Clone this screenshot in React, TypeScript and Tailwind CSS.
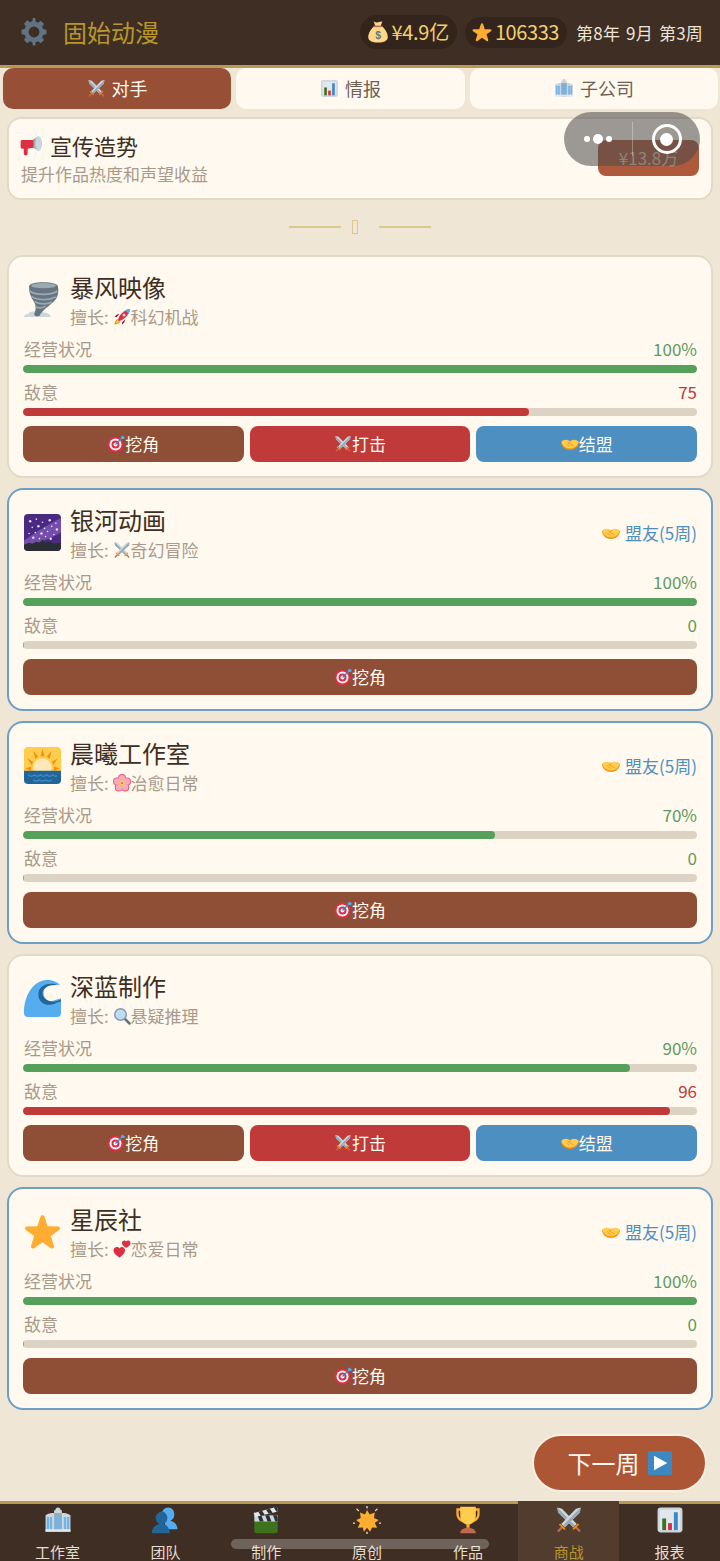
import type { ReactNode } from "react";

type IconProps = { className?: string };

function Svg({ className, children }: IconProps & { children: ReactNode }) {
  return (
    <svg viewBox="0 0 36 36" className={className}>
      {children}
    </svg>
  );
}

const Gear = ({ className }: IconProps) => (
  <Svg className={className}>
    <path
      fill="#5f7384"
      d="M34 21v-6l-4.300-.7a12 12 0 0 0-1.200-2.900l2.500-3.600-4.300-4.300-3.600 2.500c-.9-.5-1.900-.9-2.900-1.200L19.500 0h-3l-.7 4.300c-1 .3-2 .7-2.900 1.200L9.300 3 5 7.300l2.500 3.600c-.5.900-.9 1.900-1.200 2.900L2 15v6l4.300.7c.3 1 .7 2 1.200 2.900L5 28.200l4.300 4.300 3.600-2.500c.9.500 1.900.9 2.900 1.200l.7 4.300h3l.7-4.300c1-.3 2-.7 2.900-1.200l3.600 2.500 4.300-4.300-2.500-3.600c.5-.9.900-1.900 1.200-2.900L34 21zM18 25a7 7 0 1 1 0-14 7 7 0 0 1 0 14z"
    />
  </Svg>
);

const Swords = ({ className }: IconProps) => (
  <Svg className={className}>
    <path fill="#ccd6dd" d="M3 2l6 1.500L28 23l-4.500 4.500L4 8.500z" />
    <path fill="#99aab5" d="M3 2l22.800 23.200-2.300 2.300L4 8.500z" />
    <path fill="#ccd6dd" d="M33 2l-6 1.500L8 23l4.500 4.500L32 8.500z" />
    <path fill="#99aab5" d="M33 2L10.200 25.200l2.300 2.300L32 8.500z" />
    <path fill="#c1694f" d="M3.500 31l6-6 2 2-6 6a1.400 1.400 0 0 1-2-2zM32.500 31l-6-6-2 2 6 6a1.400 1.400 0 0 0 2-2z" />
    <path fill="#f4900c" d="M6.500 22.500l7 7-1.500 1.500-7-7zM29.500 22.500l-7 7 1.500 1.500 7-7z" />
  </Svg>
);

const Chart = ({ className }: IconProps) => (
  <Svg className={className}>
    <rect x="2" y="2" width="32" height="32" rx="4" fill="#ccd6dd" />
    <path fill="#e1e8ed" d="M5 5h26v26H5z" />
    <rect x="8" y="16" width="5" height="15" fill="#3e721d" />
    <rect x="15.500" y="22" width="5" height="9" fill="#dd2e44" />
    <rect x="23" y="8" width="5" height="23" fill="#3b88c3" />
  </Svg>
);

const Office = ({ className }: IconProps) => (
  <Svg className={className}>
    <path fill="#ccd6dd" d="M2 12c4-3 8-3 11-3V5.500h1.500C15 3 16 2 18 2s3 1 3.500 3.500H23V9c3 0 7 0 11 3v21H2z" />
    <path fill="#99aab5" d="M13 9h10v24H13z" />
    <path
      fill="#6fb5ec"
      d="M3.500 14h3v16h-3zM7.500 14h3v16h-3zM14.500 12h3v18h-3zM18.500 12h3v18h-3zM25.500 14h3v16h-3zM29.500 14h3v16h-3z"
    />
    <path fill="#e1e8ed" d="M2 30h32v3H2z" />
  </Svg>
);

const Megaphone = ({ className }: IconProps) => (
  <Svg className={className}>
    <path fill="#99aab5" d="M28 4c3.500-1 6 5 6 11s-2.500 12-6 11L20 21V9z" />
    <path fill="#ccd6dd" d="M28 4c-3 1-4 6-4 11s1 10 4 11c3.500 1 6-5 6-11S31.500 3 28 4z" />
    <path fill="#dd2e44" d="M1 12c0-1.500 1-2.500 2.500-2.500H21v12L12 23v7.500c0 2-1.500 3-3 3s-3-1-3-3V23H3.500C2 23 1 22 1 20.500z" />
  </Svg>
);

const MoneyBag = ({ className }: IconProps) => (
  <Svg className={className}>
    <path fill="#fdd888" d="M24 8c5 4 10 12 10 18 0 6-6 9-16 9S2 32 2 26c0-6 5-14 10-18z" />
    <path fill="#fdd888" d="M11 1c2 1.500 4.500 1.500 7 1s5-.5 7-1l-2.500 7h-9z" />
    <path fill="#bf6952" d="M11.500 7.500h13v2.500h-13z" />
    <text
      x="18"
      y="29"
      textAnchor="middle"
      fontSize="17"
      fontWeight="700"
      fill="#67757f"
      fontFamily="'Liberation Sans', sans-serif"
    >
      $
    </text>
  </Svg>
);

const Star = ({ className, fill = "#ffac33" }: IconProps & { fill?: string }) => (
  <Svg className={className}>
    <path
      fill={fill}
      d="M27.287 34.627c-.404 0-.806-.124-1.152-.371L18 28.422l-8.135 5.834c-.693.496-1.623.496-2.312-.008-.689-.499-.979-1.385-.721-2.194l3.034-9.792-8.062-5.681c-.685-.505-.97-1.393-.708-2.203.264-.808 1.016-1.357 1.866-1.363L12.947 13l3.179-9.549c.268-.809 1.023-1.353 1.874-1.353.851 0 1.606.545 1.875 1.353L23 13l10.036.015c.853.006 1.606.556 1.867 1.363.263.81-.022 1.698-.708 2.203l-8.062 5.681 3.034 9.792c.26.809-.033 1.695-.72 2.194-.347.254-.753.379-1.16.379z"
    />
  </Svg>
);

const Tornado = ({ className }: IconProps) => (
  <Svg className={className}>
    <path fill="#ccd6dd" d="M0 35c0-2 2-3 4-3 1-2 4-3 7-2 3-1 7-1 9 1 3 0 6 2 6 4z" />
    <path fill="#66757f" d="M5 5c0-5 27-5 28 0 1 6 0 11-4 15-5 5-11 8-14 14-3 1-5 0-5-2 1-3 2-6 1-9-1-3-4-6-5-10C5 10 5 7 5 5z" />
    <path
      fill="none"
      stroke="#99aab5"
      strokeWidth="1.600"
      d="M5.500 10c7 4 20 4 27 0M7 15c6 4 17 4 24 .5M10 20c5 3 13 3 17 .5M11 25c3 1.500 7 1.500 10-.5"
    />
    <ellipse cx="19" cy="4.500" rx="12" ry="2.500" fill="#99aab5" />
  </Svg>
);

const Rocket = ({ className }: IconProps) => (
  <Svg className={className}>
    <path fill="#f4900c" d="M3 33c0-5 2-9 6-11l5 5c-2 4-6 6-11 6z" />
    <path fill="#ffcc4d" d="M6 30c0-3 1-5 4-6l2 2c-1 3-3 4-6 4z" />
    <path fill="#a0041e" d="M7 18l6-6-5 1-5 5zM18 29l6-6-1 5-5 5z" />
    <path fill="#dd2e44" d="M10 24C12 14 22 4 34 2c-2 12-12 22-22 24z" />
    <path fill="#55acee" d="M24 4.500c3.500-1.500 7-2.500 10-2.500 0 3-1 6.500-2.500 10z" />
    <circle cx="22" cy="14" r="3" fill="#ccd6dd" />
  </Svg>
);

const Target = ({ className }: IconProps) => (
  <Svg className={className}>
    <circle cx="17" cy="19" r="16" fill="#dd2e44" />
    <circle cx="17" cy="19" r="12" fill="#f5f8fa" />
    <circle cx="17" cy="19" r="8" fill="#dd2e44" />
    <circle cx="17" cy="19" r="4" fill="#f5f8fa" />
    <path stroke="#3b88c3" strokeWidth="2.500" d="M17 19L31 5" />
    <path fill="#55acee" d="M28 3l5-2v3h3l-2 4h-5l-1-1z" />
  </Svg>
);

const Handshake = ({ className }: IconProps) => (
  <Svg className={className}>
    <path fill="#f4900c" d="M0 15c3-3 7-5 11-4l7 1 7-1c4-1 8 1 11 4-1 9-9 15-18 15S1 24 0 15z" />
    <path fill="#ffcc4d" d="M1 13c3-2 7-4 11-3l6 2 6-2c4-1 8 1 11 3-1 8-8 14-17 14S2 21 1 13z" />
    <path fill="none" stroke="#f4900c" strokeWidth="1.500" d="M13 14c3 4 8 5 12 8M11 18l6 5M20 13l-6 3" />
  </Svg>
);

const Galaxy = ({ className }: IconProps) => {
  const dots = [
    [6, 7], [12, 5], [18, 8], [25, 6], [31, 9], [8, 13], [14, 12], [20, 14], [27, 12], [32, 15],
    [5, 19], [11, 18], [17, 19], [23, 17], [29, 20], [9, 23], [15, 24], [21, 22], [26, 24],
  ];
  return (
    <Svg className={className}>
      <rect width="36" height="36" rx="4" fill="#4a2a80" />
      <path fill="#744eaa" d="M0 26C8 20 20 12 36 4v14C26 24 14 28 0 32z" />
      {dots.map(([x, y], i) => (
        <circle key={i} cx={x} cy={y} r={i % 3 === 0 ? 1.2 : 0.8} fill="#e8dcff" />
      ))}
      <path fill="#292f33" d="M0 30l5-2 3 1 4-2 3 1 3-3 3 3 4-1 4 2 7-1v4a4 4 0 0 1-4 4H4a4 4 0 0 1-4-4z" />
    </Svg>
  );
};

const Sunrise = ({ className }: IconProps) => (
  <Svg className={className}>
    <path fill="#ffcc4d" d="M4 0h28a4 4 0 0 1 4 4v20H0V4a4 4 0 0 1 4-4z" />
    <path
      fill="#f4900c"
      d="M18 2l2 7h-4zM9 4l5 5.500-3 2zM27 4l-5 5.500 3 2zM3 11l6 3.500-1.500 3zM33 11l-6 3.500 1.500 3zM1 21l6-2v4zM35 21l-6-2v4z"
    />
    <circle cx="18" cy="20" r="9" fill="#ffe8b6" />
    <path fill="#226699" d="M0 23h36v9a4 4 0 0 1-4 4H4a4 4 0 0 1-4-4z" />
    <path
      fill="none"
      stroke="#3b88c3"
      strokeWidth="1.400"
      d="M4 27c2 2 4 2 6 0 2 2 4 2 6 0 2 2 4 2 6 0 2 2 4 2 6 0 1 1 3 2 4 1M9 32c2 1.500 4 1.500 6 0 2 1.500 4 1.500 6 0 2 1.500 4 1.500 6 0"
    />
  </Svg>
);

const Flower = ({ className }: IconProps) => (
  <Svg className={className}>
    <g fill="#ea596e">
      <circle cx="18" cy="8" r="8" />
      <circle cx="8" cy="15" r="8" />
      <circle cx="28" cy="15" r="8" />
      <circle cx="11.500" cy="27" r="8" />
      <circle cx="24.500" cy="27" r="8" />
    </g>
    <g fill="#f4abba">
      <circle cx="18" cy="8.500" r="6.500" />
      <circle cx="8.500" cy="15" r="6.500" />
      <circle cx="27.500" cy="15" r="6.500" />
      <circle cx="12" cy="26.500" r="6.500" />
      <circle cx="24" cy="26.500" r="6.500" />
    </g>
    <circle cx="18" cy="18" r="5" fill="#ffcc4d" />
    <circle cx="18" cy="18" r="2" fill="#ea596e" />
  </Svg>
);

const Wave = ({ className }: IconProps) => (
  <Svg className={className}>
    <path fill="#55acee" d="M4 36a4 4 0 0 1-4-4c0-16 8-31 22-32 6 0 11 2 13 5-8-2-16 1-16 8 0 6 6 9 10 7 3-1 5-2 7-2v14a4 4 0 0 1-4 4z" />
    <path fill="#226699" d="M33 5c-7-3-19-1-19 9 0 9 9 12 16 9 2-1 4-2 6-2v-2c-3 1-5 2-8 2-5 0-10-3-10-8 0-6 7-9 15-8z" />
  </Svg>
);

const Search = ({ className }: IconProps) => (
  <Svg className={className}>
    <path stroke="#67757f" strokeWidth="5" strokeLinecap="round" d="M24 24l9 9" />
    <circle cx="15" cy="15" r="13" fill="#8899a6" />
    <circle cx="15" cy="15" r="10" fill="#bbddf5" />
  </Svg>
);

const Hearts = ({ className }: IconProps) => (
  <Svg className={className}>
    <path fill="#dd2e44" d="M24 20c0-3-3-6-6-6-2 0-4 1-5 3-1-2-3-3-5-3-4 0-7 3-7 7 0 7 8 11 12 14 4-3 11-8 11-15z" />
    <path fill="#dd2e44" d="M35 6c0-3-2-5-5-5-1.500 0-3 1-4 2-.7-1-2-2-3.500-2C20 1 18 3 18 6c0 5 6 8 8.500 10C29 14 35 11 35 6z" />
  </Svg>
);

const Team = ({ className }: IconProps) => (
  <Svg className={className}>
    <path fill="#55acee" d="M34 30c0-6-4-10-9-11 3-1 5-4 5-8 0-5-3-9-8-9s-8 4-8 9c0 3 2 6 4 8v11z" />
    <path fill="#226699" d="M24 35c0-7-4-11-8-12 3-1 5-4 5-8 0-4-3-8-7-8s-8 4-8 8c0 4 2 7 5 8-5 1-10 5-10 12z" />
  </Svg>
);

const Clapper = ({ className }: IconProps) => (
  <Svg className={className}>
    <path fill="#3e721d" d="M3 19h30v13a3 3 0 0 1-3 3H6a3 3 0 0 1-3-3z" />
    <path fill="#ccd6dd" d="M3 12h30v8H3z" />
    <path fill="#292f33" d="M7 12h5l3 8h-5zM17 12h5l3 8h-5zM27 12h5l1 3v5h-3z" />
    <path fill="#e1e8ed" d="M2 9L32 1l1.500 6L4 14z" />
    <path fill="#292f33" d="M8 7.500l5-1.300 3.500 5.300-5 1.300zM18 4.800l5-1.300 3.500 5.300-5 1.300zM28 2l4-1 1.500 6-2 .5z" />
  </Svg>
);

const Sparkle = ({ className }: IconProps) => (
  <Svg className={className}>
    <path
      fill="#ffac33"
      d="M18 5l3.500 6 6.500-2.500-1 7 6 2.500-5 4 3 6-6.500-.5L22 33l-4-5-4 5-1.500-5.500-6.500.5 3-6-5-4 6-2.500-1-7 6.500 2.500z"
    />
    <path
      stroke="#ffe8b6"
      strokeWidth="1.600"
      strokeLinecap="round"
      d="M18 0v2.500M5 4l2 2M31 4l-2 2M34 22h2M0 22h2M18 33.500V36"
    />
  </Svg>
);

const Trophy = ({ className }: IconProps) => (
  <Svg className={className}>
    <path fill="#ffac33" d="M3 3h30v7c0 6-4 10-9 11h-2v-3h2c3-1 6-4 6-8V6H6v4c0 4 3 7 6 8h2v3h-2C7 20 3 16 3 10z" />
    <path fill="#ffcc4d" d="M8 1h20v12c0 7-5 11-10 11S8 20 8 13z" />
    <path fill="#ffac33" d="M16 23h4v5h-4z" />
    <path fill="#c1694f" d="M8 35c0-4 4-7 10-7s10 3 10 7z" />
  </Svg>
);

const Play = ({ className }: IconProps) => (
  <Svg className={className}>
    <rect width="36" height="36" rx="3" fill="#3b88c3" />
    <path fill="#fff" d="M9 7l20 11L9 29z" />
  </Svg>
);

type Rival = {
  name: string;
  Logo: (p: IconProps) => ReactNode;
  Genre: (p: IconProps) => ReactNode;
  genre: string;
  health: number;
  hostility: number;
  ally?: boolean;
};

const RIVALS: Rival[] = [
  { name: "暴风映像", Logo: Tornado, Genre: Rocket, genre: "科幻机战", health: 100, hostility: 75 },
  { name: "银河动画", Logo: Galaxy, Genre: Swords, genre: "奇幻冒险", health: 100, hostility: 0, ally: true },
  { name: "晨曦工作室", Logo: Sunrise, Genre: Flower, genre: "治愈日常", health: 70, hostility: 0, ally: true },
  { name: "深蓝制作", Logo: Wave, Genre: Search, genre: "悬疑推理", health: 90, hostility: 96 },
  { name: "星辰社", Logo: Star, Genre: Hearts, genre: "恋爱日常", health: 100, hostility: 0, ally: true },
];

const NAV = [
  { label: "工作室", Icon: Office },
  { label: "团队", Icon: Team },
  { label: "制作", Icon: Clapper },
  { label: "原创", Icon: Sparkle },
  { label: "作品", Icon: Trophy },
  { label: "商战", Icon: Swords, active: true },
  { label: "报表", Icon: Chart },
];

function Stat({ label, value, pct, barColor, valueColor }: { label: string; value: string; pct: number; barColor: string; valueColor: string }) {
  return (
    <div>
      <div className="flex h-[26px] items-center justify-between pl-px text-[17px] leading-[26px]">
        <span className="text-[#a89a8a]">{label}</span>
        <span className={valueColor}>{value}</span>
      </div>
      <div className="mt-[3px] h-2 overflow-hidden rounded-full bg-[#ddd3c4]">
        {pct > 0 ? (
          <div className={`h-full rounded-full ${barColor}`} style={{ width: `${pct}%` }} />
        ) : (
          <div className="h-full w-px bg-[#a89a8a]" />
        )}
      </div>
    </div>
  );
}

function ActionButton({ Icon, label, color }: { Icon: (p: IconProps) => ReactNode; label: string; color: string }) {
  return (
    <button className={`flex h-9 flex-1 items-center justify-center rounded-lg text-[17px] text-[#fff9ef] ${color}`}>
      <Icon className="h-[18px] w-[18px]" />
      <span>{label}</span>
    </button>
  );
}

function RivalCard({ rival }: { rival: Rival }) {
  const { name, Logo, Genre, genre, health, hostility, ally } = rival;
  return (
    <div
      className={`rounded-[16px] border-2 bg-[#fff9ef] px-[14px] pb-[14px] pt-[13px] ${
        ally ? "border-[#6d9fc4]" : "border-[#e3d9c9]"
      }`}
    >
      <div className="flex items-center pl-px">
        <Logo className="h-[37px] w-[37px] shrink-0" />
        <div className="ml-[9px] flex-1">
          <div className="h-[34px] text-2xl leading-[34px] text-[#3d2e24]">{name}</div>
          <div className="flex h-[26px] items-center text-[17px] leading-[26px] text-[#a89a8a]">
            擅长:&nbsp;
            <Genre className="h-[18px] w-[18px]" />
            {genre}
          </div>
        </div>
        {ally && (
          <div className="flex items-center gap-[5px] text-[17px] text-[#4d8fc0]">
            <Handshake className="h-[18px] w-[18px]" />
            盟友(5周)
          </div>
        )}
      </div>
      <div className="mt-[6px] space-y-[6.5px]">
        <Stat label="经营状况" value={`${health}%`} pct={health} barColor="bg-[#55a05a]" valueColor="text-[#5f9a62]" />
        <Stat
          label="敌意"
          value={`${hostility}`}
          pct={hostility}
          barColor="bg-[#c03a3a]"
          valueColor={hostility > 0 ? "text-[#c03a3a]" : "text-[#5f9a62]"}
        />
      </div>
      <div className="mt-[9.5px] flex gap-[6px]">
        <ActionButton Icon={Target} label="挖角" color="bg-[#8f4e36]" />
        {!ally && <ActionButton Icon={Swords} label="打击" color="bg-[#c03a3a]" />}
        {!ally && <ActionButton Icon={Handshake} label="结盟" color="bg-[#4d8fc0]" />}
      </div>
    </div>
  );
}

export default function App() {
  return (
    <div className="relative flex h-[1561px] w-[720px] flex-col overflow-hidden bg-[#f0e6d5] font-['Noto_Sans_CJK_SC','Noto_Sans',sans-serif]">
      {/* Header */}
      <header className="flex h-[67.5px] shrink-0 items-center border-b-[3px] border-[#b89a54] bg-[#3f2e24] pl-[20px] pr-[17px]">
        <Gear className="h-7 w-7" />
        <h1 className="ml-[15px] text-2xl font-normal text-[#b8962e]">固始动漫</h1>
        <div className="ml-auto flex h-[34px] items-center rounded-full bg-[#33251b] pl-[7px] pr-[8px] text-xl tracking-[-0.3px] text-[#f2cf72]">
          <MoneyBag className="mr-[3px] h-[24px] w-[22px]" />
          ¥4.9亿
        </div>
        <div className="ml-[8px] flex h-[31px] items-center rounded-full bg-[#33251b] pl-[7px] pr-[8px] text-xl tracking-[-0.4px] text-[#f2cf72]">
          <Star className="mr-[3px] h-[20px] w-[20px]" />
          106333
        </div>
        <div className="ml-[9px] text-[17px] tracking-[0.2px] text-[#eee5d6] [word-spacing:2px]">第8年 9月 第3周</div>
      </header>

      {/* Tabs */}
      <div className="grid shrink-0 grid-cols-[228px_229px_248px] gap-[5px] px-[3px] text-lg">
        <button className="flex h-[41px] items-center justify-center gap-[6px] rounded-[10px] bg-[#974f36] text-[#fff9ef]">
          <Swords className="h-[19px] w-[19px]" />
          对手
        </button>
        <button className="flex h-[41px] items-center justify-center gap-[6px] rounded-[10px] bg-[#fff9ef] text-[#6f6054]">
          <Chart className="h-[19px] w-[19px]" />
          情报
        </button>
        <button className="flex h-[41px] items-center justify-center gap-[6px] rounded-[10px] bg-[#fff9ef] text-[#6f6054]">
          <Office className="h-[20px] w-[20px]" />
          子公司
        </button>
      </div>

      <main className="flex-1 px-[7px] pt-[8px]">
        {/* Promotion */}
        <div className="flex h-[83px] items-center justify-between rounded-[14px] border-2 border-[#e3d9c9] bg-[#fff9ef] pl-[11px] pr-[12px]">
          <div>
            <div className="flex h-[32px] items-center text-[22px] text-[#3d2e24]">
              <Megaphone className="mr-[7px] h-[23px] w-[23px]" />
              宣传造势
            </div>
            <div className="h-[26px] pl-px text-[17px] leading-[26px] text-[#a89a8a]">提升作品热度和声望收益</div>
          </div>
          <button className="h-9 w-[101px] rounded-lg bg-[#ae5a3c] text-[17px] text-[#d7c9b9]">¥13.8万</button>
        </div>

        {/* Divider */}
        <div className="my-[18.5px] flex h-[18px] items-center justify-center">
          <span className="h-[2px] w-[52px] bg-[#dcc88e]" />
          <span className="ml-[11px] mr-[21px] h-[14px] w-[6px] border border-[#dcc88e]" />
          <span className="h-[2px] w-[52px] bg-[#dcc88e]" />
        </div>

        <div className="space-y-[10px]">
          {RIVALS.map((r) => (
            <RivalCard key={r.name} rival={r} />
          ))}
        </div>
      </main>

      {/* Next week */}
      <button className="absolute left-[532px] top-[1434px] flex h-[58px] w-[175px] items-center justify-center gap-[8px] rounded-full border-2 border-[#f8f0e2] bg-[#ac5636] text-2xl text-[#fff9ef]">
        下一周
        <Play className="h-6 w-6" />
      </button>

      {/* Bottom nav */}
      <nav className="grid h-[60px] shrink-0 grid-cols-[115px_repeat(6,1fr)] border-t-[3px] border-[#b89a54] bg-[#3f2e24]">
        {NAV.map(({ label, Icon, active }) => (
          <div
            key={label}
            className={`-mt-[3px] flex flex-col items-center pt-[5px] ${active ? "bg-[#523c2d]" : ""}`}
          >
            <Icon className="h-[28px] w-[28px] shrink-0" />
            <span className={`mt-[7px] text-[15px] leading-[22px] ${active ? "text-[#b8962e]" : "text-[#e6decf]"}`}>
              {label}
            </span>
          </div>
        ))}
      </nav>

      {/* WeChat capsule */}
      <div className="absolute left-[564px] top-[112px] flex h-[54px] w-[136px] items-center rounded-full bg-[#4a4a4a]/55">
        <div className="flex w-[68px] items-center justify-center gap-[3px]">
          <span className="h-[6px] w-[6px] rounded-full bg-white" />
          <span className="h-[10px] w-[10px] rounded-full bg-white" />
          <span className="h-[6px] w-[6px] rounded-full bg-white" />
        </div>
        <span className="h-[34px] w-px bg-white/30" />
        <div className="flex flex-1 items-center justify-center">
          <span className="flex h-[30px] w-[30px] items-center justify-center rounded-full border-[3px] border-white">
            <span className="h-[13px] w-[13px] rounded-full bg-white" />
          </span>
        </div>
      </div>

      {/* Home indicator */}
      <div className="absolute left-[231px] top-[1539px] h-[10px] w-[258px] rounded-full bg-white/25" />
    </div>
  );
}
